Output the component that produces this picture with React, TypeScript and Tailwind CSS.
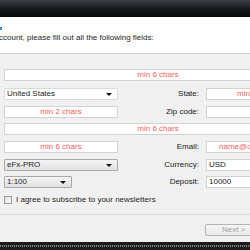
const font = { fontFamily: '"Liberation Sans", Arial, sans-serif' };

function Field({ value, hint, className = "" }: { value?: string; hint?: string; className?: string }) {
  return (
    <div className={`shrink-0 h-[12px] bg-white border border-[#d2d2d2] flex items-center overflow-hidden whitespace-nowrap ${className}`}>
      {hint && <span className="w-full text-center text-[#ff5a5a] text-[8px] leading-none">{hint}</span>}
      {value && <span className="pl-[2px] text-[#1a1a1a] text-[8px] leading-none">{value}</span>}
    </div>
  );
}

function Select({ value, white, className = "" }: { value: string; white?: boolean; className?: string }) {
  return (
    <div
      className={`shrink-0 h-[12px] border rounded-[1px] flex items-center justify-between pl-[2px] pr-[5px] ${
        white ? "bg-white border-[#dadada]" : "bg-gradient-to-b from-[#f4f4f4] to-[#e2e2e2] border-[#a8a8a8]"
      } ${className}`}
    >
      <span className="text-[8px] leading-none text-[#1a1a1a]">{value}</span>
      <span className="w-0 h-0 border-l-[3px] border-r-[3px] border-t-[3px] border-l-transparent border-r-transparent border-t-[#111]" />
    </div>
  );
}

function Label({ text, className = "" }: { text: string; className?: string }) {
  return (
    <div className={`shrink-0 text-right text-[8px] leading-none text-[#1a1a1a] pr-[1px] ${className}`}>{text}</div>
  );
}

export default function App() {
  return (
    <div className="w-[250px] h-[250px] overflow-hidden flex flex-col bg-[#f0f0f0]" style={font}>
      <div className="h-[17px] shrink-0 bg-gradient-to-b from-[#3d4247] via-[#15191d] to-[#06090c]" />

      <div className="h-[36px] shrink-0 bg-white relative">
        <span className="absolute left-0 top-[10px] w-[2px] h-[3px] bg-[#3b8fd6]" />
        <p className="absolute left-[-1px] top-[17px] text-[8px] leading-none text-[#1e1e1e] whitespace-nowrap">
          ccount, please fill out all the following fields:
        </p>
      </div>
      <div className="h-px shrink-0 bg-[#d4d4d4]" />

      <div className="h-[160px] shrink-0 pl-[4px] flex flex-col overflow-hidden">
        <Field hint="min 6 chars" className="mt-[15px] w-[308px] border-[#a9c8e4]" />

        <div className="mt-[7px] flex items-center">
          <Select value="United States" white className="w-[114px]" />
          <Label text="State:" className="w-[82px]" />
          <div className="shrink-0 ml-[6px] w-[60px] h-[12px] bg-white border border-[#d2d2d2] flex items-center pl-[30px] text-[8px] leading-none text-[#ff5a5a] whitespace-nowrap overflow-hidden">
            min 2 chars
          </div>
        </div>

        <div className="mt-[6px] flex items-center">
          <Field hint="min 2 chars" className="w-[114px]" />
          <Label text="Zip code:" className="w-[82px]" />
          <Field className="ml-[6px] w-[60px]" />
        </div>

        <Field hint="min 6 chars" className="mt-[5px] w-[308px]" />

        <div className="mt-[6px] flex items-center">
          <Field hint="min 6 chars" className="w-[114px]" />
          <Label text="Email:" className="w-[82px]" />
          <div className="shrink-0 ml-[6px] w-[60px] h-[12px] bg-white border border-[#d2d2d2] flex items-center pl-[12px] text-[8px] leading-none text-[#ff5a5a] whitespace-nowrap overflow-hidden">
            name@domain.com
          </div>
        </div>

        <div className="mt-[6px] flex items-center">
          <Select value="eFx-PRO" className="w-[114px]" />
          <Label text="Currency:" className="w-[82px]" />
          <Field value="USD" className="ml-[6px] w-[60px]" />
        </div>

        <div className="mt-[5px] flex items-center">
          <Select value="1:100" className="w-[68px]" />
          <Label text="Deposit:" className="w-[128px]" />
          <Field value="10000" className="ml-[6px] w-[60px]" />
        </div>

        <div className="mt-[8px] flex items-center gap-[4px]">
          <span className="shrink-0 w-[8px] h-[8px] border border-[#9a9a9a] bg-gradient-to-br from-[#e2e2e2] to-[#fafafa]" />
          <span className="text-[8px] leading-none text-[#1e1e1e] whitespace-nowrap">I agree to subscribe to your newsletters</span>
        </div>
      </div>

      <div className="h-px shrink-0 bg-[#d8d8d8]" />
      <div className="h-[27px] shrink-0 flex pl-[205px] pt-[9px] overflow-hidden">
        <div className="shrink-0 w-[55px] h-[12px] border border-[#b4b4b4] rounded-[2px] bg-gradient-to-b from-[#f6f6f6] to-[#e9e9e9] flex items-center pl-[16px] text-[8px] leading-none text-[#a3a3a3] whitespace-nowrap">
          Next &gt;
        </div>
      </div>

      <div className="h-[8px] shrink-0 bg-[#1c1c1c] flex flex-col justify-center">
        <div className="h-[2px] bg-[repeating-linear-gradient(90deg,#7a7a7a_0_1px,#2a2a2a_1px_2px)]" />
      </div>
    </div>
  );
}
